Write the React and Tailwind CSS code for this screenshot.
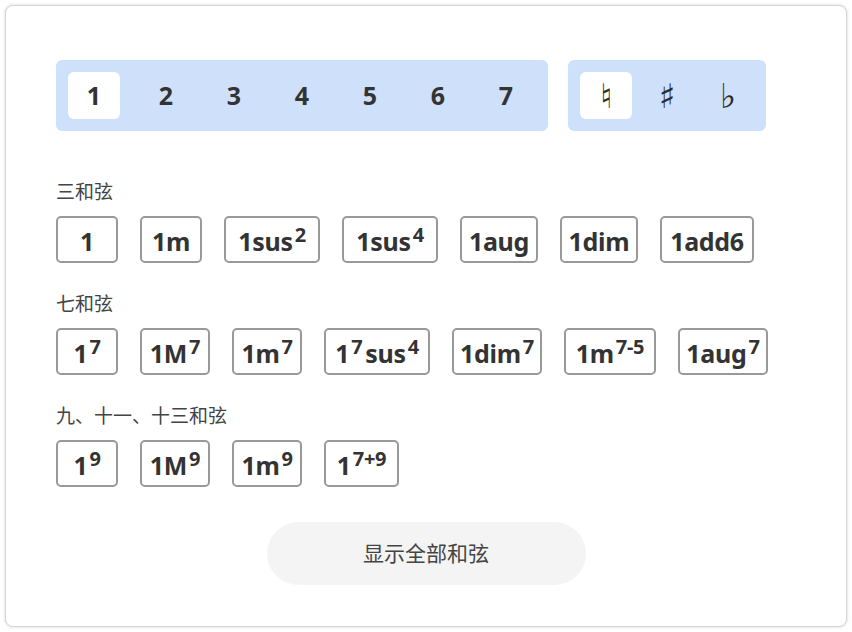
import React, { useState } from 'react';

const degrees = ['1', '2', '3', '4', '5', '6', '7'];
const accidentals = ['♮', '♯', '♭'];

const groups = [
  {
    title: '三和弦',
    chords: [
      { w: 'w-[62px]', parts: ['1', ''] },
      { w: 'w-[62px]', parts: ['1m', ''] },
      { w: 'w-[96px]', parts: ['1sus', '2'] },
      { w: 'w-[96px]', parts: ['1sus', '4'] },
      { w: 'w-[78px]', parts: ['1aug', ''] },
      { w: 'w-[78px]', parts: ['1dim', ''] },
      { w: 'w-[94px]', parts: ['1add6', ''] },
    ],
  },
  {
    title: '七和弦',
    chords: [
      { w: 'w-[62px]', parts: ['1', '7'] },
      { w: 'w-[70px]', parts: ['1M', '7'] },
      { w: 'w-[70px]', parts: ['1m', '7'] },
      { w: 'w-[106px]', parts: ['1', '7', 'sus', '4'] },
      { w: 'w-[90px]', parts: ['1dim', '7'] },
      { w: 'w-[92px]', parts: ['1m', '7-5'] },
      { w: 'w-[90px]', parts: ['1aug', '7'] },
    ],
  },
  {
    title: '九、十一、十三和弦',
    chords: [
      { w: 'w-[62px]', parts: ['1', '9'] },
      { w: 'w-[70px]', parts: ['1M', '9'] },
      { w: 'w-[70px]', parts: ['1m', '9'] },
      { w: 'w-[75px]', parts: ['1', '7+9'] },
    ],
  },
];

function Sup({ children }) {
  return (
    <span className="relative -top-[9px] ml-[2px] text-[20px] font-bold">{children}</span>
  );
}

function ChordButton({ w, parts }) {
  const [base, sup, rest, sup2] = parts;
  return (
    <button
      className={
        'flex h-[47px] items-center justify-center rounded-[5px] border-2 border-[#999999] bg-white pt-[4px] ' + w
      }
    >
      <span className="whitespace-nowrap text-[25px] font-bold leading-none tracking-[-0.3px] text-[#333333]">
        {base}
        {sup && <Sup>{sup}</Sup>}
        {rest && <span className="ml-[3px]">{rest}</span>}
        {sup2 && <Sup>{sup2}</Sup>}
      </span>
    </button>
  );
}

export default function App() {
  const [degree, setDegree] = useState(0);
  const [acc, setAcc] = useState(0);

  return (
    <div
      className="m-[5px] rounded-[8px] border border-[#d6d6d6] bg-white px-[50px] pb-[41px] pt-[54px] shadow-[0_0_3px_rgba(0,0,0,0.18)]"
      style={{ fontFamily: '"Noto Sans", "Noto Sans CJK SC", sans-serif' }}
    >
      <div className="flex gap-[20px]">
        <div className="flex h-[71px] w-[492px] items-center gap-[16px] rounded-[6px] bg-[#cfe1fa] px-[12px]">
          {degrees.map((d, i) => (
            <button
              key={d}
              onClick={() => setDegree(i)}
              className={
                'flex h-[47px] w-[52px] items-center justify-center rounded-[6px] text-[25px] font-bold text-[#333333] ' +
                (i === 0 ? 'mr-[4px] ' : '') +
                (degree === i ? 'bg-white' : '')
              }
            >
              {d}
            </button>
          ))}
        </div>
        <div className="flex h-[71px] w-[198px] items-center justify-between rounded-[6px] bg-[#cfe1fa] px-[12px]">
          {accidentals.map((a, i) => (
            <button
              key={a}
              onClick={() => setAcc(i)}
              className={
                'flex h-[47px] w-[52px] items-center justify-center rounded-[6px] text-[34px] leading-none text-[#2a2a2a] ' +
                (acc === i ? 'bg-white' : '')
              }
              style={{ fontFamily: '"DejaVu Sans", serif' }}
            >
              {a}
            </button>
          ))}
        </div>
      </div>

      <div className="mt-[49px] flex flex-col gap-[29px]">
        {groups.map((g) => (
          <div key={g.title}>
            <div className="h-[24px] text-[19px] leading-[24px] text-[#444444]">{g.title}</div>
            <div className="mt-[12px] flex gap-[22px]">
              {g.chords.map((c, i) => (
                <ChordButton key={i} w={c.w} parts={c.parts} />
              ))}
            </div>
          </div>
        ))}
      </div>

      <div className="mt-[35px] flex justify-center">
        <button className="h-[63px] w-[319px] rounded-full bg-[#f4f4f4] text-[21px] text-[#444444]">
          显示全部和弦
        </button>
      </div>
    </div>
  );
}
